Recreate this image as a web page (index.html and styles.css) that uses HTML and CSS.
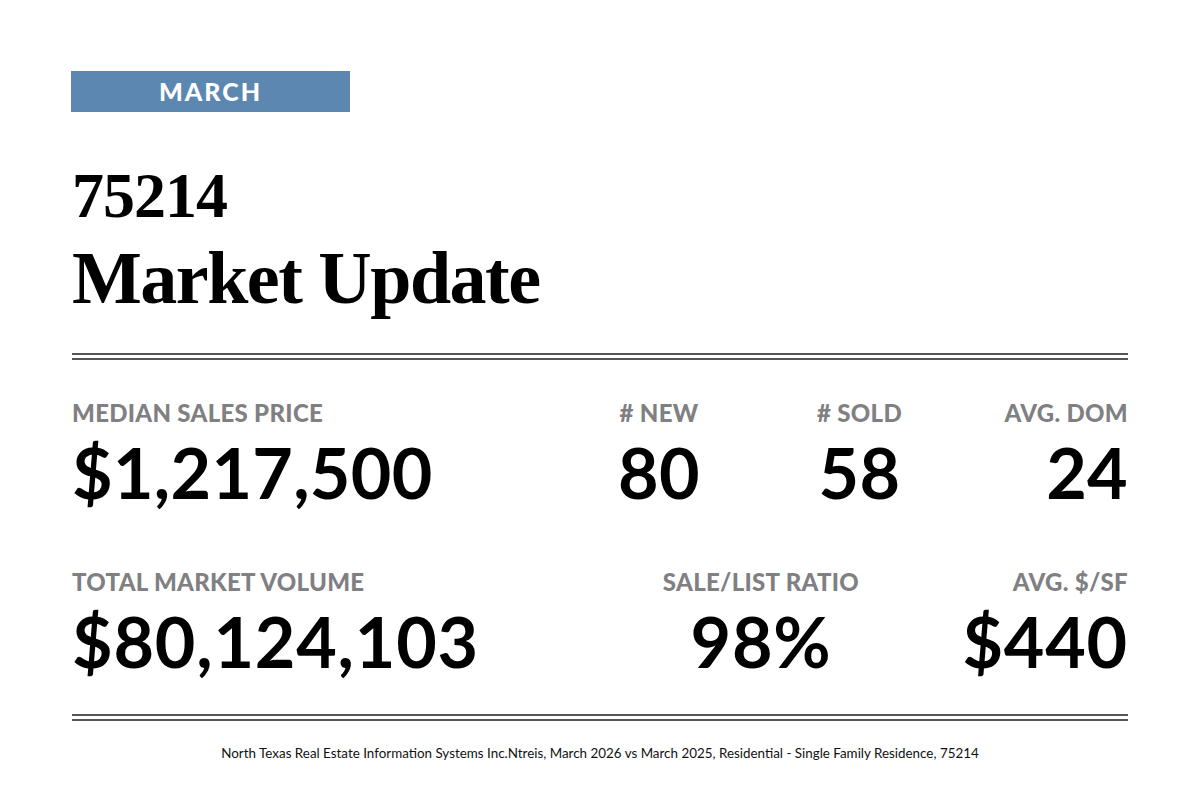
FILE: index.html
```html
<!DOCTYPE html>
<html>
<head>
<meta charset="utf-8">
<link rel="stylesheet" href="styles.css">
</head>
<body>
<div class="page">
  <div class="month">MARCH</div>
  <h1 class="title"><span class="zip">75214</span><span class="sub">Market Update</span></h1>
  <div class="rule"></div>
  <div class="row row-a">
    <div class="stat left"><div class="label">MEDIAN SALES PRICE</div><div class="value">$1,217,500</div></div>
    <div class="stat center"><div class="label"># NEW</div><div class="value">80</div></div>
    <div class="stat center"><div class="label"># SOLD</div><div class="value">58</div></div>
    <div class="stat right"><div class="label">AVG. DOM</div><div class="value">24</div></div>
  </div>
  <div class="row row-b">
    <div class="stat left"><div class="label">TOTAL MARKET VOLUME</div><div class="value">$80,124,103</div></div>
    <div class="stat center"><div class="label">SALE/LIST RATIO</div><div class="value">98%</div></div>
    <div class="stat right"><div class="label">AVG. $/SF</div><div class="value">$440</div></div>
  </div>
  <div class="rule rule-bottom"></div>
  <p class="source">North Texas Real Estate Information Systems Inc.Ntreis, March 2026 vs March 2025, Residential - Single Family Residence, 75214</p>
</div>
</body>
</html>
```
FILE: styles.css
```css
html, body { margin: 0; padding: 0; background: #ffffff; }
.page {
  width: 1056px;
  padding: 71px 72px 0 72px;
  font-family: "Lato", "Liberation Sans", sans-serif;
  color: #000;
}
.month {
  width: 279px;
  height: 41px;
  margin-left: -1px;
  background: #5b87b1;
  color: #fff;
  font-weight: 900;
  font-size: 25px;
  letter-spacing: 2px;
  line-height: 41px;
  text-align: center;
}
.title {
  margin: 52px 0 0 0;
  font-family: "Liberation Serif", serif;
  font-weight: 700;
  display: flex;
  flex-direction: column;
}
.zip { font-size: 64px; line-height: 64px; letter-spacing: -1px; }
.sub { font-size: 74px; line-height: 80px; letter-spacing: -1.5px; margin-top: 10px; }
.rule {
  margin-top: 35px;
  height: 3px;
  border-top: 2px solid #555;
  border-bottom: 2px solid #555;
}
.row {
  display: grid;
  margin-top: 39px;
}
.row-a { grid-template-columns: 487px 200px 201px 168px; }
.row-b { grid-template-columns: 589px 200px 267px; margin-top: 58px; }
.stat.left { text-align: left; }
.stat.center { text-align: center; }
.stat.right { text-align: right; }
.label {
  font-weight: 900;
  font-size: 24px;
  line-height: 28px;
  color: #808083;
  letter-spacing: 0.3px;
}
.value {
  font-weight: 700;
  font-size: 70px;
  line-height: 76px;
  margin-top: 7px;
  letter-spacing: 0.3px;
}
.row-b .value { letter-spacing: 0.8px; }
.rule-bottom { margin-top: 35px; }
.source {
  margin: 24px 0 0 0;
  text-align: center;
  font-size: 13.4px;
  line-height: 16px;
  color: #111;
}
```
